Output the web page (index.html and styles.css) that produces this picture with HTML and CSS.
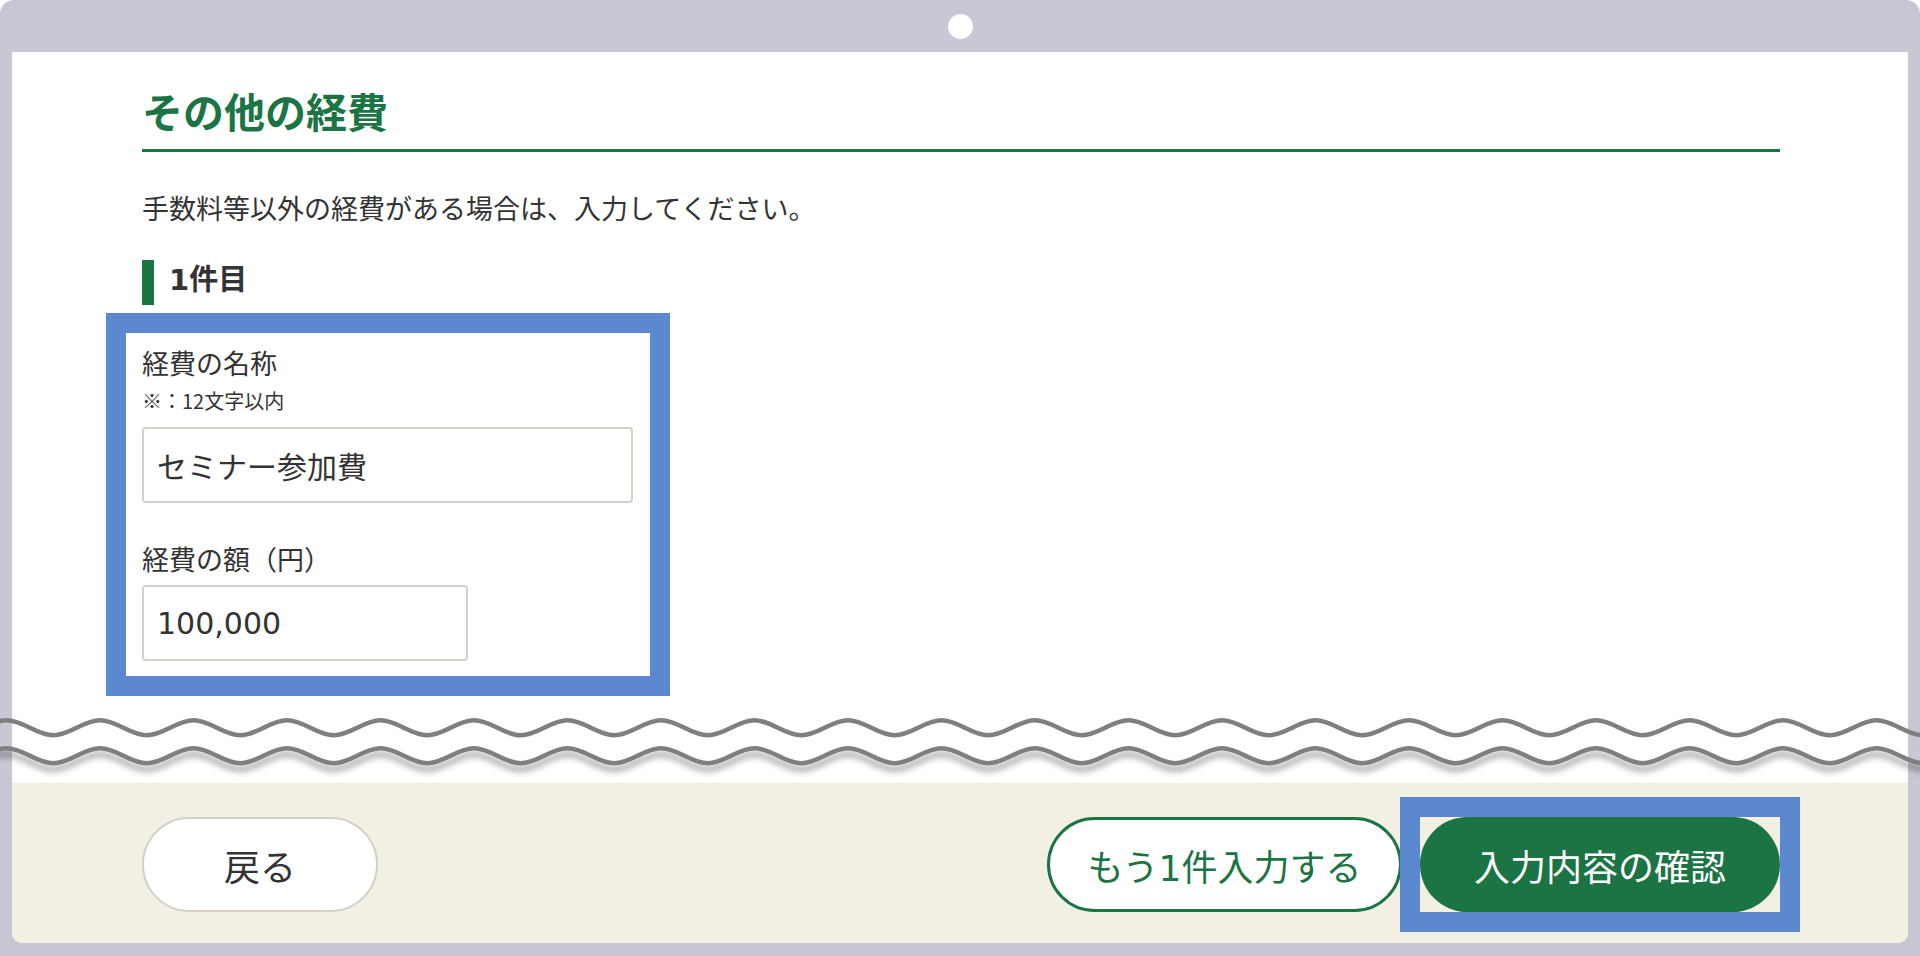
FILE: index.html
```html
<!DOCTYPE html>
<html lang="ja">
<head>
<meta charset="utf-8">
<title>その他の経費</title>
<link rel="stylesheet" href="styles.css">
</head>
<body>
<div class="frame">
  <div class="topbar"><span class="camera"></span></div>
  <div class="screen">
    <main class="content">
      <h1 class="title">その他の経費</h1>
      <p class="lead">手数料等以外の経費がある場合は、入力してください。</p>
      <h2 class="item-heading">1件目</h2>
      <div class="field-group">
        <label class="label" for="name">経費の名称</label>
        <div class="note">※：12文字以内</div>
        <input class="input" id="name" type="text" value="セミナー参加費">
        <label class="label second" for="amount">経費の額（円）</label>
        <input class="input short" id="amount" type="text" value="100,000">
      </div>
    </main>
    <footer class="actions">
      <button class="btn btn-back" type="button">戻る</button>
      <div class="right">
        <button class="btn btn-more" type="button">もう1件入力する</button>
        <span class="hl"><button class="btn btn-confirm" type="button">入力内容の確認</button></span>
      </div>
    </footer>
  </div>
  <svg class="cut" width="1920" height="80" viewBox="0 700 1920 80" aria-hidden="true">
    <defs>
      <path id="wave" d="M-87,720.3 c16.83,0 29.92,15 46.75,15 s29.92,-15 46.75,-15 s29.92,15 46.75,15 s29.92,-15 46.75,-15 s29.92,15 46.75,15 s29.92,-15 46.75,-15 s29.92,15 46.75,15 s29.92,-15 46.75,-15 s29.92,15 46.75,15 s29.92,-15 46.75,-15 s29.92,15 46.75,15 s29.92,-15 46.75,-15 s29.92,15 46.75,15 s29.92,-15 46.75,-15 s29.92,15 46.75,15 s29.92,-15 46.75,-15 s29.92,15 46.75,15 s29.92,-15 46.75,-15 s29.92,15 46.75,15 s29.92,-15 46.75,-15 s29.92,15 46.75,15 s29.92,-15 46.75,-15 s29.92,15 46.75,15 s29.92,-15 46.75,-15 s29.92,15 46.75,15 s29.92,-15 46.75,-15 s29.92,15 46.75,15 s29.92,-15 46.75,-15 s29.92,15 46.75,15 s29.92,-15 46.75,-15 s29.92,15 46.75,15 s29.92,-15 46.75,-15 s29.92,15 46.75,15 s29.92,-15 46.75,-15 s29.92,15 46.75,15 s29.92,-15 46.75,-15 s29.92,15 46.75,15 s29.92,-15 46.75,-15 s29.92,15 46.75,15 s29.92,-15 46.75,-15 s29.92,15 46.75,15 s29.92,-15 46.75,-15 s29.92,15 46.75,15 s29.92,-15 46.75,-15 s29.92,15 46.75,15" fill="none" stroke="#7f7f7f" stroke-width="4.6"/>
      <filter id="shadow" x="-5%" y="-50%" width="110%" height="250%">
        <feDropShadow dx="0" dy="6" stdDeviation="3" flood-color="#000" flood-opacity="0.4"/>
      </filter>
    </defs>
    <use href="#wave"/>
    <use href="#wave" y="28" filter="url(#shadow)"/>
  </svg>
</div>
</body>
</html>
```

FILE: styles.css
```css
html, body {
  margin: 0;
  background: #fff;
}

body {
  font-family: "Noto Sans CJK JP", "Noto Sans", sans-serif;
  color: #333;
}

.frame {
  position: relative;
  width: 1920px;
  height: 956px;
  box-sizing: border-box;
  padding: 0 12px 13px;
  background: #c8c8d4;
  border-radius: 14px 14px 0 0;
  display: flex;
  flex-direction: column;
  overflow: hidden;
}

.topbar {
  height: 52px;
  flex: none;
  display: flex;
  align-items: center;
  justify-content: center;
}

.camera {
  width: 25px;
  height: 25px;
  border-radius: 50%;
  background: #fff;
}

.screen {
  flex: 1;
  display: flex;
  flex-direction: column;
  background: #fff;
  border-radius: 0 0 10px 10px;
  overflow: hidden;
}

.content {
  flex: 1;
  padding: 30px 128px 0 130px;
}

.title {
  margin: 0;
  font-size: 41px;
  font-weight: 700;
  line-height: 56px;
  color: #1a7443;
  padding-bottom: 11px;
  border-bottom: 3px solid #1a7443;
}

.lead {
  margin: 36px 0 0;
  font-size: 27px;
  line-height: 40px;
}

.item-heading {
  margin: 32px 0 0;
  font-family: "DejaVu Sans", "Noto Sans CJK JP", sans-serif;
  font-size: 29px;
  font-weight: 700;
  line-height: 41px;
  padding: 0 0 4px 15px;
  border-left: 12px solid #1a7443;
  color: #333;
}

.field-group {
  margin: 28px 0 0 -16px;
  width: 524px;
  box-sizing: border-box;
  padding: 10px 17px 15px 16px;
  outline: 20px solid #5c88d0;
}

.label {
  display: block;
  font-size: 27px;
  line-height: 40px;
}

.label.second {
  margin-top: 36px;
}

.note {
  margin-top: 4px;
  font-size: 20px;
  line-height: 28px;
}

.input {
  display: block;
  margin: 12px 0 0;
  width: 491px;
  height: 76px;
  box-sizing: border-box;
  border: 2px solid #d6d1c9;
  border-radius: 4px;
  padding: 0 13px;
  font-family: "DejaVu Sans", "Noto Sans CJK JP", sans-serif;
  font-size: 30px;
  color: #333;
  background: #fff;
}

.input.short {
  width: 326px;
  margin-top: 6px;
}

.actions {
  height: 160px;
  flex: none;
  box-sizing: border-box;
  background: #f2efe5;
  padding: 34px 128px 0 130px;
  display: flex;
  justify-content: space-between;
  align-items: flex-start;
}

.right {
  display: flex;
  gap: 18px;
}

.btn {
  height: 95px;
  box-sizing: border-box;
  border-radius: 48px;
  font-family: "Noto Sans CJK JP", "Noto Sans", sans-serif;
  font-size: 36px;
  display: flex;
  align-items: center;
  justify-content: center;
  padding: 0;
  margin: 0;
}

.btn-back {
  width: 236px;
  background: #fff;
  border: 2px solid #d5d0c5;
  color: #333;
}

.btn-more {
  width: 355px;
  background: #fff;
  border: 3px solid #1a7443;
  color: #1a7443;
  font-family: "DejaVu Sans", "Noto Sans CJK JP", sans-serif;
}

.hl {
  display: flex;
  outline: 20px solid #5c88d0;
}

.btn-confirm {
  width: 360px;
  background: #1a7443;
  border: none;
  color: #fff;
}

.cut {
  position: absolute;
  left: 0;
  top: 700px;
  pointer-events: none;
}
```
